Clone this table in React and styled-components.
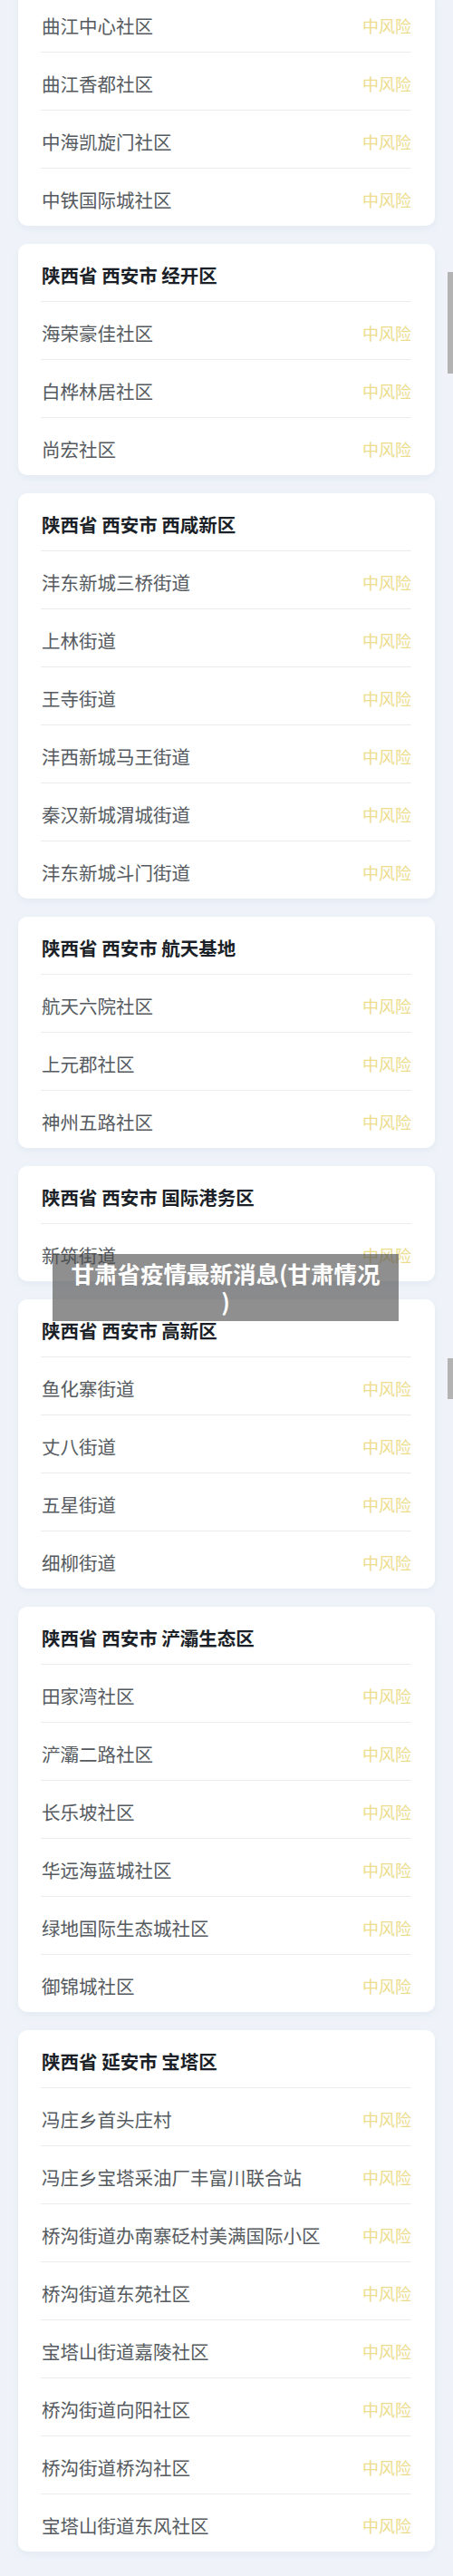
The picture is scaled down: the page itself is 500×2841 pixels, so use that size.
import React from 'react';
import styled, { createGlobalStyle } from 'styled-components';

const GlobalStyle = createGlobalStyle`
  html, body {
    margin: 0;
    padding: 0;
    background: #eff3f9;
  }
  body {
    font-family: "Noto Sans CJK SC", "Noto Sans", sans-serif;
  }
`;

const groups = [
  {
    title: null,
    items: ['曲江中心社区', '曲江香都社区', '中海凯旋门社区', '中铁国际城社区'],
  },
  {
    title: '陕西省 西安市 经开区',
    items: ['海荣豪佳社区', '白桦林居社区', '尚宏社区'],
  },
  {
    title: '陕西省 西安市 西咸新区',
    items: [
      '沣东新城三桥街道',
      '上林街道',
      '王寺街道',
      '沣西新城马王街道',
      '秦汉新城渭城街道',
      '沣东新城斗门街道',
    ],
  },
  {
    title: '陕西省 西安市 航天基地',
    items: ['航天六院社区', '上元郡社区', '神州五路社区'],
  },
  {
    title: '陕西省 西安市 国际港务区',
    items: ['新筑街道'],
  },
  {
    title: '陕西省 西安市 高新区',
    items: ['鱼化寨街道', '丈八街道', '五星街道', '细柳街道'],
  },
  {
    title: '陕西省 西安市 浐灞生态区',
    items: [
      '田家湾社区',
      '浐灞二路社区',
      '长乐坡社区',
      '华远海蓝城社区',
      '绿地国际生态城社区',
      '御锦城社区',
    ],
  },
  {
    title: '陕西省 延安市 宝塔区',
    items: [
      '冯庄乡首头庄村',
      '冯庄乡宝塔采油厂丰富川联合站',
      '桥沟街道办南寨砭村美满国际小区',
      '桥沟街道东苑社区',
      '宝塔山街道嘉陵社区',
      '桥沟街道向阳社区',
      '桥沟街道桥沟社区',
      '宝塔山街道东风社区',
    ],
  },
];

const App = () => {
  return (
    <>
      <GlobalStyle />
      <Page>
        {groups.map((group, i) => (
          <Card key={i} $cut={!group.title}>
            {group.title && <Header>{group.title}</Header>}
            {group.items.map((name, j) => (
              <Row key={name} $first={!group.title && j === 0}>
                <Place>{name}</Place>
                <Risk>中风险</Risk>
              </Row>
            ))}
          </Card>
        ))}
        <ScrollThumb $top={300} $height={112} />
        <ScrollThumb $top={1498} $height={45} />
        <Banner>
          甘肃省疫情最新消息(甘肃情况
          <br />)
        </Banner>
      </Page>
    </>
  );
};

export default App;

const Page = styled.div`
  position: relative;
  display: flex;
  flex-direction: column;
  gap: 20px;
  padding: 0 20px 27px;
  min-height: 2841px;
  box-sizing: border-box;
  overflow: hidden;
`;

const Card = styled.div`
  background: #ffffff;
  border-radius: ${(p) => (p.$cut ? '0 0 10px 10px' : '10px')};
  margin-top: ${(p) => (p.$cut ? '-7px' : '0')};
  padding: 0 26px 0 25px;
  box-shadow: 0 3px 8px rgba(150, 170, 200, 0.12);
`;

const Header = styled.div`
  height: 63px;
  box-sizing: border-box;
  padding: 4px 0 0 1px;
  display: flex;
  align-items: center;
  font-size: 20.5px;
  font-weight: 700;
  color: #1b1f27;
`;

const Row = styled.div`
  height: 64px;
  box-sizing: border-box;
  border-top: ${(p) => (p.$first ? 'none' : '1px solid #ececec')};
  padding: ${(p) => (p.$first ? '5px' : '4px')} 0 0 1px;
  display: flex;
  align-items: center;
  justify-content: space-between;
`;

const Place = styled.span`
  font-size: 20.5px;
  color: #555a60;
`;

const Risk = styled.span`
  font-size: 18px;
  color: #ecdc8c;
`;

const ScrollThumb = styled.div`
  position: absolute;
  right: 0;
  top: ${(p) => p.$top}px;
  width: 6px;
  height: ${(p) => p.$height}px;
  background: #b3b3b3;
`;

const Banner = styled.div`
  position: absolute;
  left: 58px;
  top: 1383px;
  width: 382px;
  height: 74px;
  box-sizing: border-box;
  padding-top: 5px;
  background: rgba(75, 75, 75, 0.62);
  color: #ffffff;
  font-size: 25.5px;
  font-weight: 700;
  line-height: 31px;
  text-align: center;
`;
